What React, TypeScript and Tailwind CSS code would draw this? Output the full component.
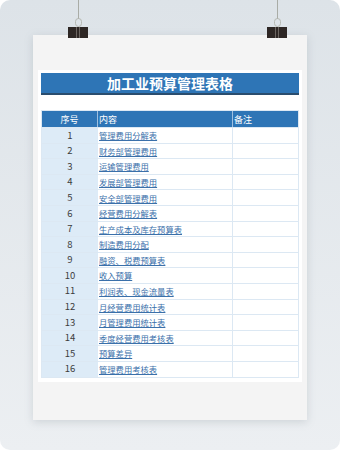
const rows = [
  '管理费用分解表',
  '财务部管理费用',
  '运输管理费用',
  '发展部管理费用',
  '安全部管理费用',
  '经营费用分解表',
  '生产成本及库存预算表',
  '制造费用分配',
  '融资、税费预算表',
  '收入预算',
  '利润表、现金流量表',
  '月经营费用统计表',
  '月管理费用统计表',
  '季度经营费用考核表',
  '预算差异',
  '管理费用考核表',
];

function Clip() {
  return (
    <div className="flex flex-col items-center">
      <div className="w-px h-[19px] bg-[#a9aca6]" />
      <div className="w-[7px] h-[9px] rounded-full border border-[#b5b8b2] -mt-px" />
      <div className="relative w-5 h-[11px] bg-[#2d2624]">
        <div className="absolute left-[8px] top-0 w-px h-full bg-[#6b6460]" />
        <div className="absolute left-[11px] top-0 w-px h-full bg-[#6b6460]" />
      </div>
    </div>
  );
}

export default function App() {
  return (
    <div
      className="w-[340px] h-[450px] bg-white"
      style={{ fontFamily: '"Noto Sans CJK SC", "Noto Sans", sans-serif' }}
    >
      <div className="relative w-full h-full rounded-[10px] bg-gradient-to-b from-[#dde3e8] to-[#eceff2] overflow-hidden">
        {/* clips */}
        <div className="absolute left-[68px] top-0 z-10">
          <Clip />
        </div>
        <div className="absolute left-[267px] top-0 z-10">
          <Clip />
        </div>

        <div className="pt-[35px] px-[33px]">
          <div className="h-[385px] bg-[#f4f4f4] shadow-[0_2px_8px_rgba(120,130,140,0.25)] pt-[35px] px-[5px]">
            <div className="bg-white px-[3px] pt-[3px] pb-[4px]">
              <div className="h-[22px] bg-[#2e75b6] border-b-2 border-[#2a4d6e] flex items-center justify-center text-white text-[14px] font-bold leading-none">
                加工业预算管理表格
              </div>

              <div className="mt-[15px] border border-[#dce8f3]">
                <div className="grid grid-cols-[56px_135px_1fr] h-[16px] bg-[#2e75b6] text-white text-[9px] leading-none">
                  <div className="flex items-center justify-center border-r border-[#9fc0e0]">序号</div>
                  <div className="flex items-center pl-px border-r border-[#9fc0e0]">内容</div>
                  <div className="flex items-center pl-px">备注</div>
                </div>
                {rows.map((name, i) => (
                  <div
                    key={i}
                    className="grid grid-cols-[56px_135px_1fr] h-[15.6px] border-t border-[#dce8f3] text-[8.3px] leading-none"
                  >
                    <div className="bg-[#ddebf7] flex items-center justify-center text-[9.5px] text-[#3c3c3c]">
                      {i + 1}
                    </div>
                    <div className="flex items-center pl-px border-r border-[#dce8f3] text-[#3a70aa] underline underline-offset-1 whitespace-nowrap">
                      {name}
                    </div>
                    <div />
                  </div>
                ))}
              </div>
            </div>
          </div>
        </div>
      </div>
    </div>
  );
}
